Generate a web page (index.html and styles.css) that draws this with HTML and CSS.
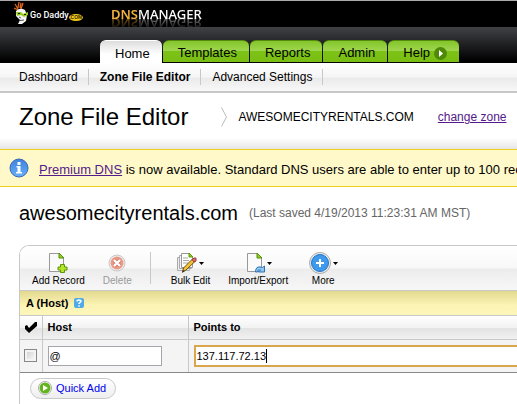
FILE: index.html
```html
<!DOCTYPE html>
<html lang="en">
<head>
<meta charset="utf-8">
<title>DNS Manager - Zone File Editor</title>
<link rel="stylesheet" href="styles.css">
</head>
<body>
<header class="brand-bar">
  <a class="brand" href="#">
    <svg class="mascot" width="15" height="23" viewBox="0 0 15 23" aria-hidden="true">
      <path d="M1 2l3 5M5 0L4 6M9 1L7 7M0 6l4 2M7 1L6 6" stroke="#e0661a" stroke-width="1.300" fill="none"/>
      <path d="M2 9q4-4 9-1l2 5-1 6-4 3H4l2-4-4-4z" fill="#f5f5f5"/>
      <path d="M2 10h5l2 2 5-2v3l-4 2-3-2-4 1z" fill="#96c81e"/>
      <path d="M4 11.500h2M10 12.500h2" stroke="#222"/>
      <path d="M6 18.500l4-.5M5 15l2 1" stroke="#555"/>
    </svg>
    <span class="brand-name">Go Daddy</span><span class="brand-com">.COM</span>
  </a>
  <span class="product"><span class="product-dns">DNS</span>MANAGER</span>
</header>
<nav class="tabs">
  <a class="tab tab-current" href="#">Home</a>
  <a class="tab" href="#">Templates</a>
  <a class="tab" href="#">Reports</a>
  <a class="tab" href="#">Admin</a>
  <a class="tab" href="#">Help
    <svg width="13" height="13" viewBox="0 0 13 13" aria-hidden="true"><circle cx="6.5" cy="6.5" r="6.5" fill="#4e8a08"/><path d="M5 3l4 3.500-4 3.500z" fill="#fff"/></svg>
  </a>
</nav>
<nav class="subnav">
  <a href="#">Dashboard</a>
  <a class="subnav-current" href="#">Zone File Editor</a>
  <a href="#">Advanced Settings</a>
</nav>
<div class="title-row">
  <h1>Zone File Editor</h1>
  <svg class="crumb" width="6" height="20" viewBox="0 0 6 20" aria-hidden="true"><path d="M.5.500L5.500 10 .5 19.500" fill="none" stroke="#bbb"/></svg>
  <span class="zone-name">AWESOMECITYRENTALS.COM</span>
  <a class="link" href="#">change zone</a>
</div>
<div class="notice">
  <svg width="20" height="20" viewBox="0 0 20 20" aria-hidden="true">
    <defs><linearGradient id="info" x2="0" y2="1"><stop stop-color="#3f80dc"/><stop offset="1" stop-color="#66b1fa"/></linearGradient></defs>
    <circle cx="10" cy="10" r="9" fill="url(#info)" stroke="#3a66b5"/>
    <path d="M8.500 4h3v3h-3zM7.500 8h4v6h1.500v1.500H7V14h1.500V9.500h-1z" fill="#fff"/>
  </svg>
  <p><a class="link" href="#">Premium DNS</a> is now available. Standard DNS users are able to enter up to 100 records per zone.</p>
</div>
<main>
  <div class="domain-row">
    <h2>awesomecityrentals.com</h2>
    <span class="saved">(Last saved 4/19/2013 11:23:31 AM MST)</span>
  </div>
  <section class="panel">
    <div class="toolbar">
      <button class="tool" type="button">
        <svg width="20" height="22" viewBox="0 0 20 22" aria-hidden="true"><path d="M1.500 1.500h10l4 4v14h-14z" fill="#fafafa" stroke="#999"/><path d="M11 1l5 5h-5z" fill="#8fd11f" stroke="#528f0b"/><path d="M12.500 12.500h4v2.500h2.500v3h-2.500v2.500h-4V18H10v-3h2.500z" fill="#b4e427" stroke="#5d950b"/></svg>
        Add Record
      </button>
      <button class="tool tool-delete" type="button" disabled>
        <svg width="20" height="22" viewBox="0 0 20 22" aria-hidden="true"><circle cx="10" cy="11" r="8" fill="#eee" stroke="#c8c8c8"/><circle cx="10" cy="11" r="6.500" fill="#eb9b87"/><path d="M7 8l6 6M13 8l-6 6" stroke="#d77864" stroke-width="4"/><path d="M7 8l6 6M13 8l-6 6" stroke="#fff" stroke-width="2.400"/></svg>
        Delete
      </button>
      <span class="divider"></span>
      <button class="tool tool-bulk" type="button">
        <svg width="28" height="22" viewBox="0 0 28 22" aria-hidden="true"><path d="M1.500 5.500h12v13h-12z" fill="#eee" stroke="#aaa"/><path d="M3.500 3.500h12v13h-12z" fill="#f5f5f5" stroke="#aaa"/><path d="M5.500 1.500h8l3 3v11h-11z" fill="#fff" stroke="#999"/><path d="M13 1l4 4h-4z" fill="#8fd11f" stroke="#5b980d"/><path d="M7 6h5M7 8.500h6M7 11h5" stroke="#aaa"/><path d="M6.500 20l1-4L17 6.500l3 2L10 18z" fill="#f4c430" stroke="#6c5014"/><path d="M16 7.500l2-1.500h2v3l-2 1z" fill="#df6a68" stroke="#9c3e3c"/><path d="M6 21l1-3 2 1z" fill="#333"/><path d="M23 10h5l-2.500 3z" fill="#000"/></svg>
        Bulk Edit
      </button>
      <button class="tool tool-import" type="button">
        <svg width="28" height="22" viewBox="0 0 28 22" aria-hidden="true"><path d="M3.500 1.500h10l4 4v14h-14z" fill="#fafafa" stroke="#999"/><path d="M13 1l5 5h-5z" fill="#8fd11f" stroke="#528f0b"/><path d="M11.500 20q0-7 7-4.500l2-1.500v6h-6l2-2q-3-1-3 2z" fill="#8cc8f2" stroke="#2f72b5"/><path d="M23 10h5l-2.500 3z" fill="#000"/></svg>
        Import/Export
      </button>
      <button class="tool tool-more" type="button">
        <svg width="30" height="22" viewBox="0 0 30 22" aria-hidden="true"><circle cx="12" cy="11" r="10.500" fill="#eee" stroke="#aaa"/><circle cx="12" cy="11" r="8.500" fill="#3f99ec" stroke="#2374c7"/><path d="M12 7v8M8 11h8" stroke="#fff" stroke-width="2"/><path d="M25 10h5l-2.500 3z" fill="#000"/></svg>
        More
      </button>
    </div>
    <div class="group">
      <h3>A (Host)</h3>
      <svg width="10" height="10" viewBox="0 0 10 10" aria-hidden="true"><rect width="10" height="10" rx="2" fill="#4fabe5"/><path d="M3 3.500q0-1.500 2-1.500t2 1.500L5 5.500V6M5 7.200v1.500" fill="none" stroke="#fff" stroke-width="1.500"/></svg>
    </div>
    <table class="records">
      <thead>
        <tr>
          <th class="col-check"><svg width="14" height="13" viewBox="0 0 14 13" role="img" aria-label="Select"><path d="M1 5l2-1 2 3 6-6h2v4L5 12 1 8z" fill="#000"/></svg></th>
          <th class="col-host">Host</th>
          <th>Points to</th>
        </tr>
      </thead>
      <tbody>
        <tr>
          <td class="col-check"><input class="check" type="checkbox" aria-label="Select record"></td>
          <td><input class="field field-host" type="text" value="@" aria-label="Host"></td>
          <td><div class="focus-wrap"><input class="field field-points" type="text" value="137.117.72.13" aria-label="Points to"><span class="caret"></span></div></td>
        </tr>
      </tbody>
    </table>
    <div class="panel-foot">
      <button class="quick-add" type="button">
        <svg width="14" height="14" viewBox="0 0 14 14" aria-hidden="true"><circle cx="7" cy="7" r="6.500" fill="#fff" stroke="#aaa"/><circle cx="7" cy="7" r="5.500" fill="#62b51c"/><path d="M5 4l5 3-5 3z" fill="#fff"/></svg>
        Quick Add
      </button>
    </div>
  </section>
</main>
</body>
</html>
```
FILE: styles.css
```css
* { box-sizing: border-box; }

body {
  margin: 0;
  overflow-x: hidden;
  background: #fff;
  color: #000;
  font: 12px/16px "Liberation Sans", Arial, sans-serif;
  white-space: nowrap;
}

a { color: inherit; text-decoration: none; }
h1, h2, h3, p { margin: 0; font-weight: normal; }
svg { display: block; flex: none; }
button, input { margin: 0; font: inherit; color: inherit; }

.brand-bar {
  display: flex;
  align-items: flex-start;
  height: 27px;
  padding-left: 14px;
  border-top: 1px solid #aaa;
  background: #000;
}

.brand { display: flex; width: 97px; padding-top: 1px; color: #fff; }
.brand-name {
  padding: 5px 0 0 1px;
  font: 500 9px/16px Roboto, "Liberation Sans", sans-serif;
}
.brand-com {
  align-self: center;
  width: 14px;
  height: 7px;
  margin-top: 7px;
  border-radius: 50%;
  background: #f2c91d;
  color: #332800;
  font-size: 5px;
  font-weight: bold;
  line-height: 7px;
  text-align: center;
}

.product {
  position: relative;
  z-index: 1;
  padding-top: 5px;
  color: #fff;
  font: 500 13px/16px "Noto Sans", sans-serif;
  -webkit-box-reflect: below -7px linear-gradient(transparent 30%, rgba(0, 0, 0, .6));
}
.product-dns { color: #f2b13c; font-weight: 600; }

.tabs {
  display: flex;
  align-items: flex-end;
  gap: 1px;
  height: 36px;
  padding: 0 0 1px 100px;
  background: linear-gradient(#414246, #000 95%);
  font-size: 13px;
}
.tab {
  display: flex;
  align-items: center;
  gap: 4px;
  height: 22px;
  padding: 3px 12px 0 15px;
  border-top: 1px solid #568c0d;
  border-radius: 6px 6px 0 0;
  background: linear-gradient(#83c52a, #a0d650 48%, #7dc317 50%, #79bd13);
}
.tab-current {
  height: 23px;
  margin-bottom: -1px;
  border-color: #fff;
  background: linear-gradient(#ddd, #fff 60%);
}

.subnav {
  display: flex;
  align-items: center;
  height: 30px;
  padding-left: 19px;
  border-bottom: 2px solid #c8c8c8;
  background: linear-gradient(#fff, #f5f5f5 50%, #eaeaea 55%, #f8f8f8);
}
.subnav a { margin-right: 11px; padding-right: 10px; border-right: 1px solid #c8c8c8; }
.subnav-current { font-weight: bold; }

.title-row {
  display: flex;
  align-items: center;
  height: 56px;
  padding: 0 10px 8px 19px;
  background: linear-gradient(#fff 80%, #e6e6e6);
}
h1 { font-size: 24px; line-height: 28px; }
.crumb { margin: 0 11px 0 33px; }
.zone-name { margin-right: 24px; }
.link { color: #551a8b; text-decoration: underline; }

.notice {
  display: flex;
  align-items: center;
  gap: 10px;
  height: 38px;
  padding-left: 9px;
  overflow: hidden;
  border: solid #f0cf1f;
  border-width: 1px 0;
  background: #fff9c9;
  font-size: 13px;
}
.notice p { padding-top: 4px; }

main { padding-left: 19px; }
.domain-row { display: flex; align-items: center; gap: 11px; height: 58px; padding-bottom: 6px; }
h2 { font-size: 20px; line-height: 24px; }
.saved { color: #666; }

.panel {
  overflow: hidden;
  border: 1px solid #c8c8c8;
  border-right: 0;
  border-radius: 10px 0 0 0;
  font-size: 11px;
}

.toolbar {
  display: flex;
  height: 45px;
  padding: 6px 0 0 12px;
  border-bottom: 1px solid #c8c8c8;
  background: linear-gradient(#fff, #f8f8f8 50%, #ececec 52%, #f7f7f7);
  font-size: 10px;
}
.tool {
  display: flex;
  flex-direction: column;
  align-items: center;
  padding: 0;
  border: 0;
  background: none;
  line-height: 14px;
}
.tool-delete { margin-left: 18px; color: #999; }
.divider { width: 1px; height: 32px; margin: 0 20px 0 18px; background: #c8c8c8; }
.tool-import { margin-left: 18px; }
.tool-more { margin-left: 20px; }

.group {
  display: flex;
  align-items: center;
  gap: 6px;
  height: 25px;
  padding-left: 6px;
  border-bottom: 1px solid #c8c8c8;
  background: linear-gradient(#e2d98f, #fbf4b4 60%, #fdf6bb);
}
h3 { font-size: 11px; font-weight: bold; }

.records { width: 100%; table-layout: fixed; border-collapse: collapse; }
.records th {
  height: 23px;
  padding: 0 0 0 5px;
  border-bottom: 1px solid #c8c8c8;
  background: linear-gradient(#fff, #f2f2f2 50%, #e2e2e2 52%, #f1f1f1);
  text-align: left;
}
.records td {
  height: 33px;
  padding: 0 0 0 5px;
  border-bottom: 1px solid #888;
  background: #f4f4f4;
}
.records th + th, .records td + td { border-left: 1px solid #c8c8c8; }
.records .col-check { width: 22px; padding-left: 4px; }
.col-host { width: 146px; }

.check {
  display: block;
  width: 13px;
  height: 13px;
  appearance: none;
  border: 1px solid #888;
  background: linear-gradient(135deg, #ccc, #fff);
  box-shadow: inset 0 0 0 2px #f4f4f4;
}
.field {
  display: block;
  height: 20px;
  padding: 0 1px;
  border: 1px solid #a5a5ae;
  border-radius: 0;
  outline: 0;
  background: #fff;
}
.field-host { width: 114px; }
.focus-wrap { position: relative; }
.field-points { width: 100%; border: solid #d9a54d; border-width: 2px 0 2px 2px; height: 22px; }
.caret { position: absolute; top: 4px; left: 72px; width: 1px; height: 14px; background: #000; }

.panel-foot { display: flex; align-items: center; height: 31px; padding-left: 10px; }
.quick-add {
  display: flex;
  align-items: center;
  gap: 4px;
  height: 21px;
  padding: 0 9px 0 7px;
  border: 1px solid #c8c8c8;
  border-radius: 11px;
  background: linear-gradient(#fff, #eee);
  color: #00e;
}
```
